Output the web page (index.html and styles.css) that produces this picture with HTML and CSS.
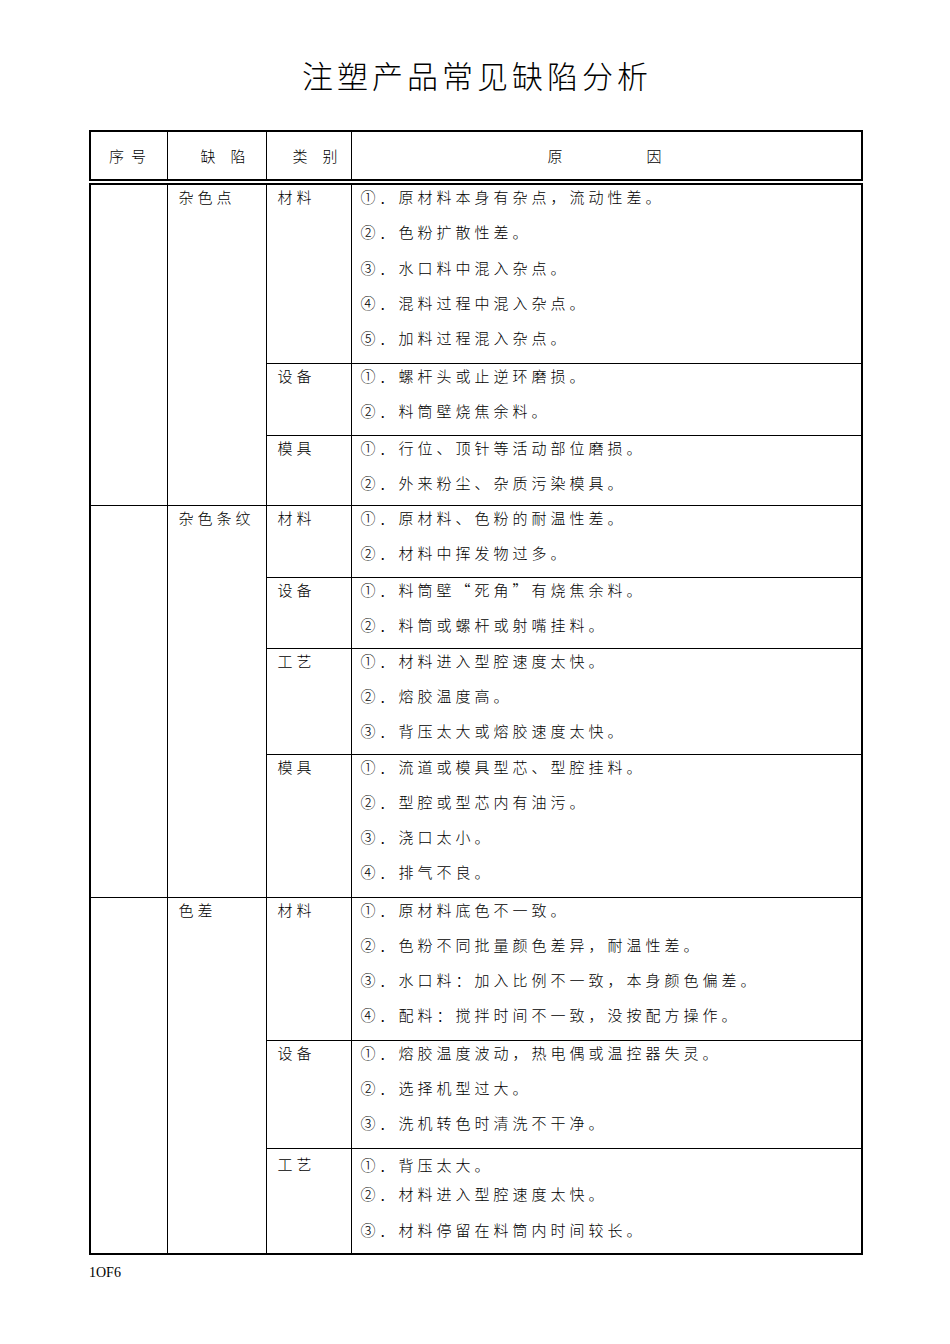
FILE: index.html
```html
<!DOCTYPE html>
<html lang="zh-CN">
<head>
<meta charset="utf-8">
<title>注塑产品常见缺陷分析</title>
<link rel="stylesheet" href="styles.css">
</head>
<body>
<div class="page">
  <h1 class="title">注塑产品常见缺陷分析</h1>

  <table class="tbl head">
    <colgroup><col class="c1"><col class="c2"><col class="c3"><col class="c4"></colgroup>
    <tr>
      <th class="h-no">序号</th>
      <th class="h-def">缺陷</th>
      <th class="h-cat">类别</th>
      <th class="h-why">原因</th>
    </tr>
  </table>

  <table class="tbl body">
    <colgroup><col class="c1"><col class="c2"><col class="c3"><col class="c4"></colgroup>
    <tr class="r179">
      <td class="no" rowspan="3"></td>
      <td class="def" rowspan="3">杂色点</td>
      <td class="cat">材料</td>
      <td class="why">
        <p>①．原材料本身有杂点，流动性差。</p>
        <p>②．色粉扩散性差。</p>
        <p>③．水口料中混入杂点。</p>
        <p>④．混料过程中混入杂点。</p>
        <p>⑤．加料过程混入杂点。</p>
      </td>
    </tr>
    <tr class="r72">
      <td class="cat">设备</td>
      <td class="why">
        <p>①．螺杆头或止逆环磨损。</p>
        <p>②．料筒壁烧焦余料。</p>
      </td>
    </tr>
    <tr class="r70">
      <td class="cat">模具</td>
      <td class="why">
        <p>①．行位、顶针等活动部位磨损。</p>
        <p>②．外来粉尘、杂质污染模具。</p>
      </td>
    </tr>

    <tr class="r72">
      <td class="no" rowspan="4"></td>
      <td class="def" rowspan="4">杂色条纹</td>
      <td class="cat">材料</td>
      <td class="why">
        <p>①．原材料、色粉的耐温性差。</p>
        <p>②．材料中挥发物过多。</p>
      </td>
    </tr>
    <tr class="r71">
      <td class="cat">设备</td>
      <td class="why">
        <p>①．料筒壁“死角”有烧焦余料。</p>
        <p>②．料筒或螺杆或射嘴挂料。</p>
      </td>
    </tr>
    <tr class="r106">
      <td class="cat">工艺</td>
      <td class="why">
        <p>①．材料进入型腔速度太快。</p>
        <p>②．熔胶温度高。</p>
        <p>③．背压太大或熔胶速度太快。</p>
      </td>
    </tr>
    <tr class="r143">
      <td class="cat">模具</td>
      <td class="why">
        <p>①．流道或模具型芯、型腔挂料。</p>
        <p>②．型腔或型芯内有油污。</p>
        <p>③．浇口太小。</p>
        <p>④．排气不良。</p>
      </td>
    </tr>

    <tr class="r143">
      <td class="no" rowspan="3"></td>
      <td class="def" rowspan="3">色差</td>
      <td class="cat">材料</td>
      <td class="why">
        <p>①．原材料底色不一致。</p>
        <p>②．色粉不同批量颜色差异，耐温性差。</p>
        <p>③．水口料：加入比例不一致，本身颜色偏差。</p>
        <p>④．配料：搅拌时间不一致，没按配方操作。</p>
      </td>
    </tr>
    <tr class="r108">
      <td class="cat">设备</td>
      <td class="why">
        <p>①．熔胶温度波动，热电偶或温控器失灵。</p>
        <p>②．选择机型过大。</p>
        <p>③．洗机转色时清洗不干净。</p>
      </td>
    </tr>
    <tr class="r106 last">
      <td class="cat">工艺</td>
      <td class="why">
        <p>①．背压太大。</p>
        <p>②．材料进入型腔速度太快。</p>
        <p>③．材料停留在料筒内时间较长。</p>
      </td>
    </tr>
  </table>

  <div class="footer">1OF6</div>
</div>
</body>
</html>
```

FILE: styles.css
```css
html, body {
  margin: 0;
  padding: 0;
  background: #fff;
}

.page {
  width: 950px;
  padding: 0 0 0 89px;
  box-sizing: border-box;
  font-family: "Noto Sans CJK SC", "Noto Sans", sans-serif;
  color: #000;
}

.title {
  margin: 55px 0 0 -89px;
  width: 950px;
  text-align: center;
  font-size: 31px;
  line-height: 40px;
  font-weight: 300;
  letter-spacing: 4px;
  text-indent: 4px;
}

.tbl {
  width: 772px;
  table-layout: fixed;
  border-collapse: collapse;
  border: 2px solid #000;
  font-size: 15px;
  font-weight: 300;
}

.c1 { width: 77px; }
.c2 { width: 99px; }
.c3 { width: 85px; }
.c4 { width: 511px; }

.head {
  margin-top: 35px;
}

.head th {
  height: 47px;
  padding: 0;
  border: 1px solid #000;
  font-weight: 300;
  text-align: left;
  vertical-align: middle;
  line-height: 24px;
  white-space: nowrap;
}

.h-no { padding-left: 18px !important; letter-spacing: 7px; }
.h-def { padding-left: 33px !important; letter-spacing: 15px; }
.h-cat { padding-left: 26px !important; letter-spacing: 15px; }
.h-why { padding-left: 196px !important; letter-spacing: 84px; }

.body {
  margin-top: 2px;
}

.r179 { height: 179px; }
.r72 { height: 72px; }
.r71 { height: 71px; }
.r70 { height: 70px; }
.r106 { height: 106px; }
.r108 { height: 108px; }
.r143 { height: 143px; }

.body td {
  border: 1px solid #000;
  vertical-align: top;
  padding: 0;
  line-height: 24px;
  letter-spacing: 4px;
  white-space: nowrap;
}

.body td.def { padding-left: 11px; }
.body td.cat { padding-left: 11px; }
.body td.why { padding-left: 9px; }

.why p {
  margin: 0 0 11.3px;
  line-height: 24px;
}

.why p:last-child { margin-bottom: 0; }

.last td.cat { padding-top: 3px; }
.last td.why { padding-top: 4px; }
.last .why p:nth-child(1) { margin-bottom: 5px; }
.last .why p:nth-child(2) { margin-bottom: 12px; }

.footer {
  margin-top: 10px;
  font-family: "Liberation Serif", "Times New Roman", serif;
  font-size: 14px;
  line-height: 16px;
}
```
